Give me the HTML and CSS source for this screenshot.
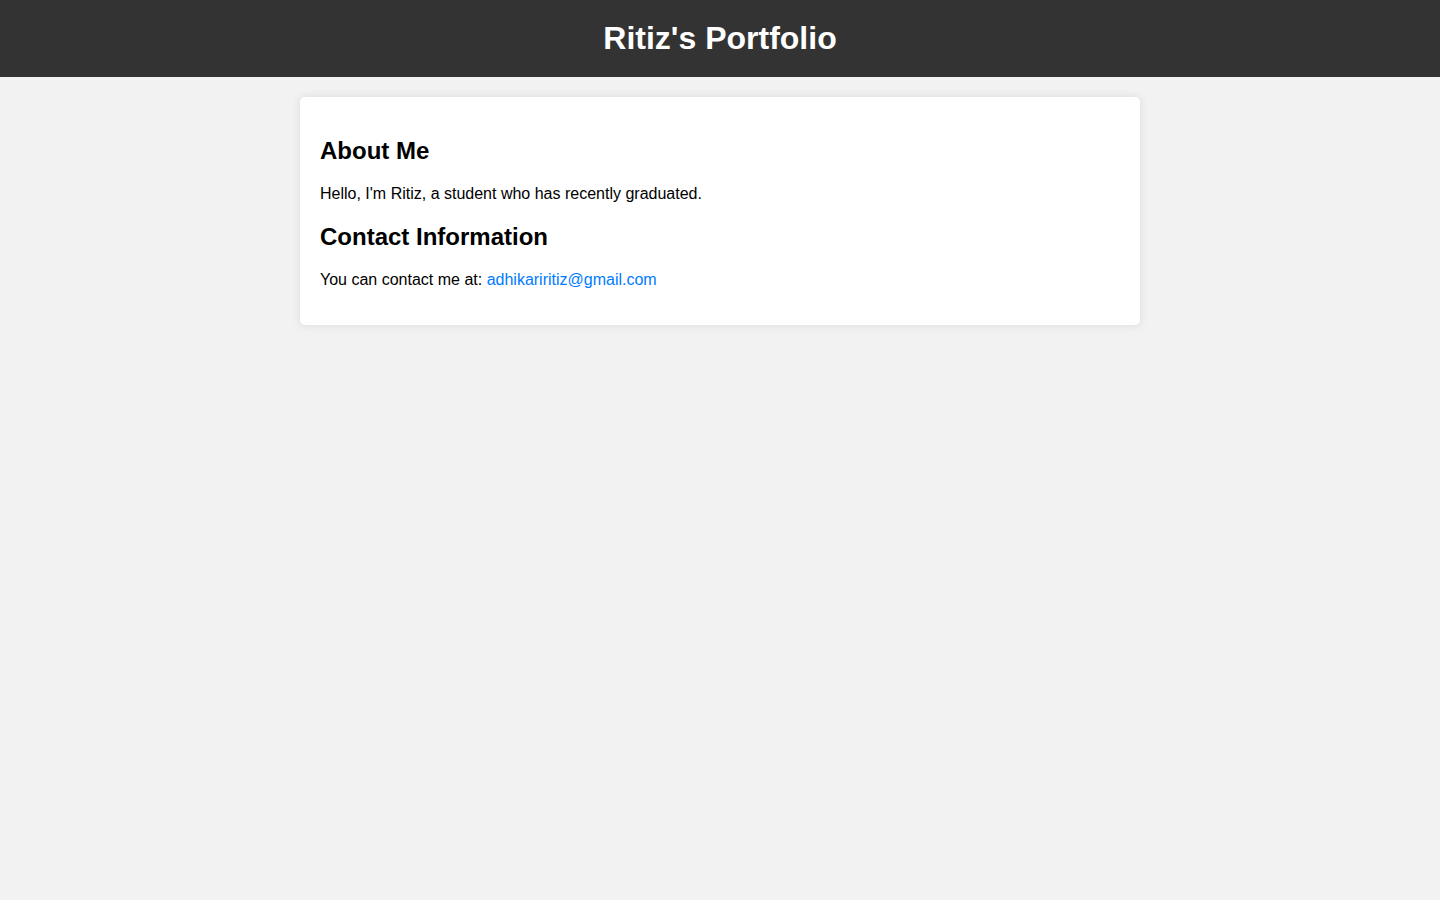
FILE: index.html
```html
<!DOCTYPE html>
<html lang="en">
<head>
<meta charset="UTF-8">
<title>Ritiz's Portfolio</title>
<link rel="stylesheet" href="styles.css">
</head>
<body>
<header class="site-header">
  <h1 class="site-title">Ritiz's Portfolio</h1>
</header>
<main class="container">
  <section class="section">
    <h2 class="section-title">About Me</h2>
    <p class="text">Hello, I'm Ritiz, a student who has recently graduated.</p>
  </section>
  <section class="section">
    <h2 class="section-title">Contact Information</h2>
    <p class="text">You can contact me at: <a class="link" href="mailto:adhikariritiz@gmail.com">adhikariritiz@gmail.com</a></p>
  </section>
</main>
</body>
</html>
```

FILE: styles.css
```css
body {
  margin: 0;
  font-family: "Liberation Sans", Arial, sans-serif;
  background: #f2f2f2;
  color: #000;
}
.site-header {
  background: #333;
  color: #fff;
  text-align: center;
  padding: 20px;
}
.site-title {
  margin: 0;
  font-size: 32px;
}
.container {
  max-width: 800px;
  margin: 20px auto;
  padding: 20px;
  background: #fff;
  border-radius: 5px;
  box-shadow: 0 0 10px rgba(0, 0, 0, 0.1);
}
.section-title {
  font-size: 24px;
  margin: 0.83em 0;
}
.text {
  font-size: 16px;
  margin: 16px 0;
}
.link {
  color: #007bff;
  text-decoration: none;
}
```
